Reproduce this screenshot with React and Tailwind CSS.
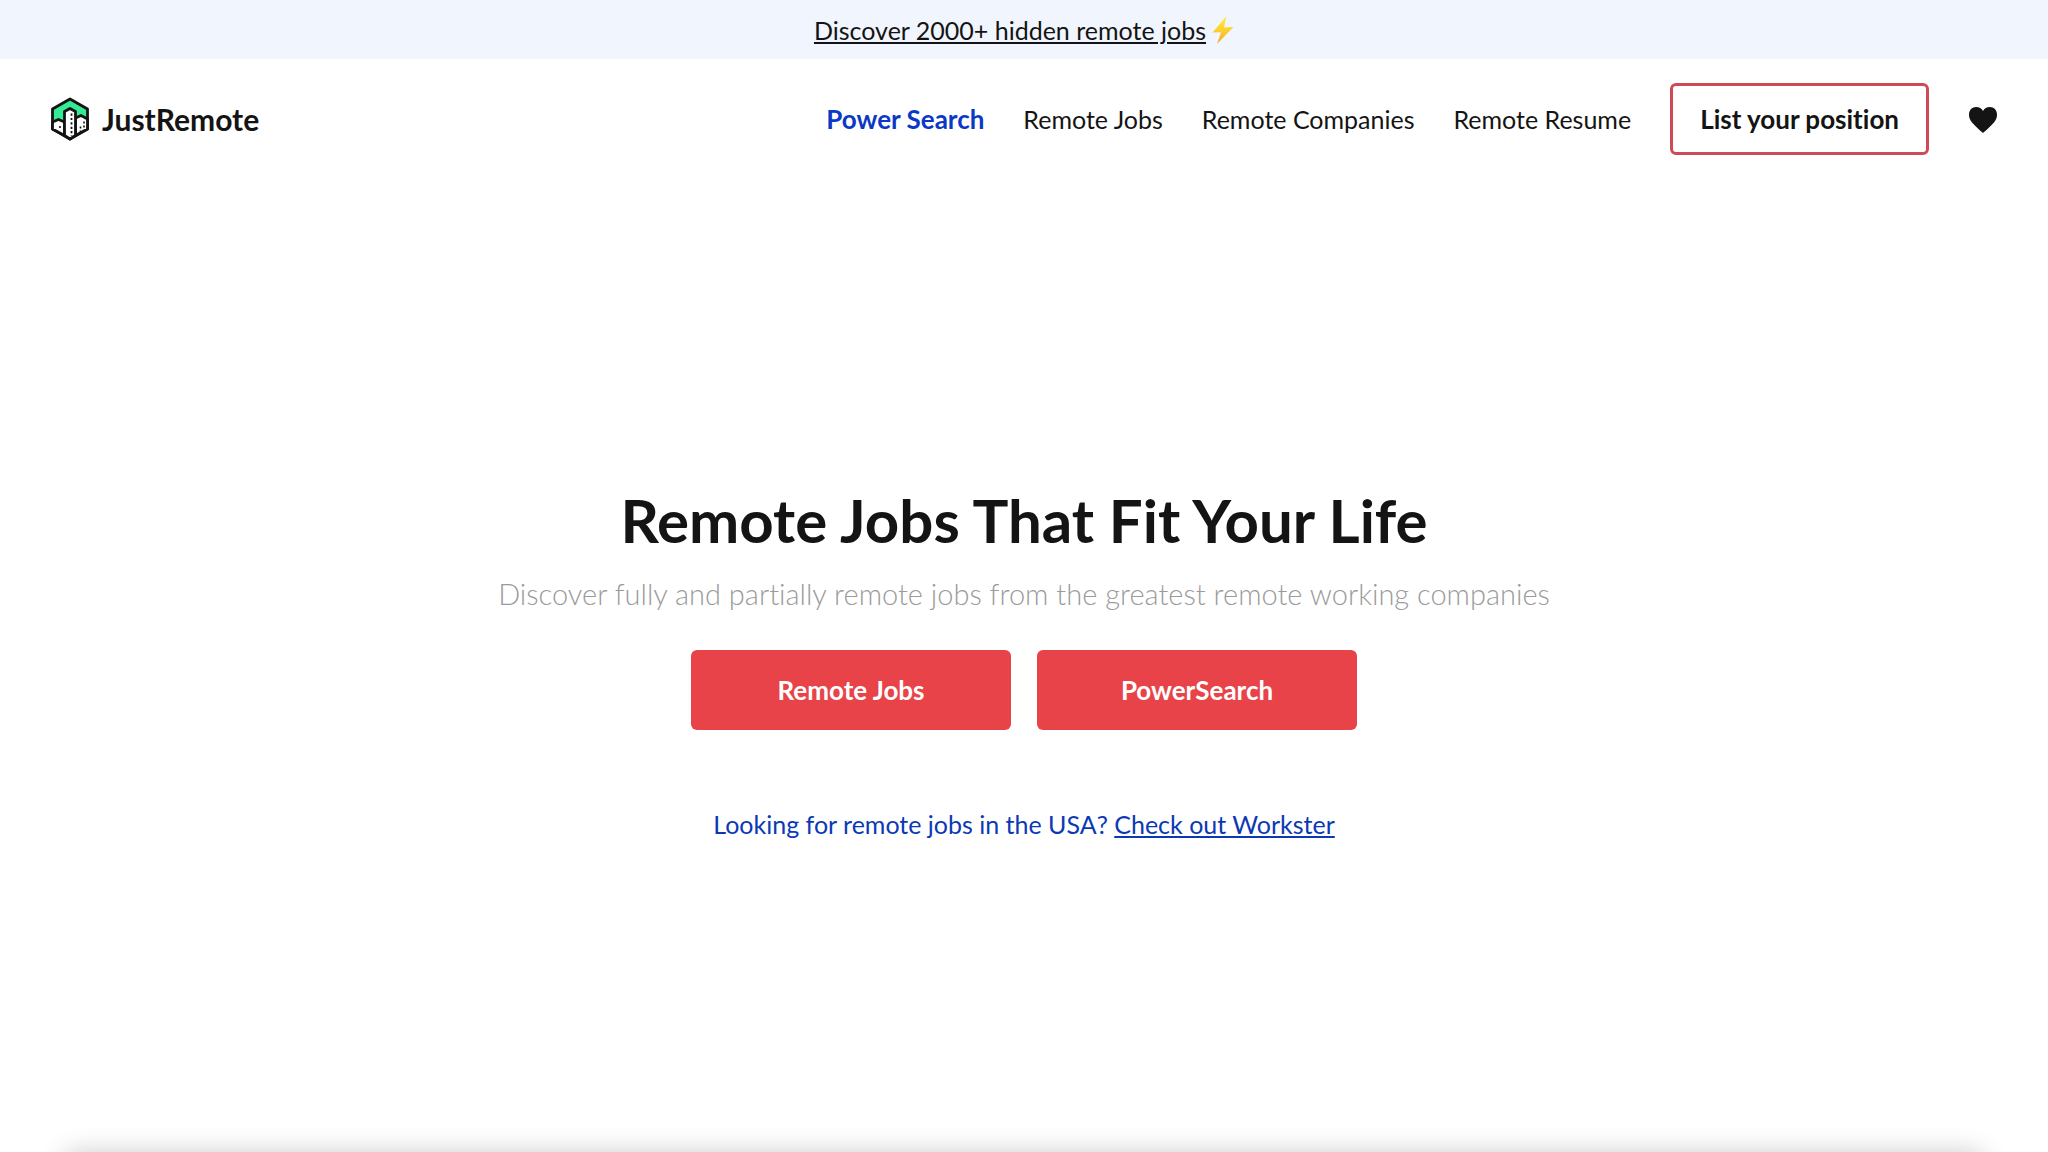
import React from 'react';

const navLinks = [
  { label: 'Remote Jobs', href: '/remote-jobs' },
  { label: 'Remote Companies', href: '/remote-companies' },
  { label: 'Remote Resume', href: '/remote-resume' },
];

const Logo = () => (
  <svg viewBox="0 0 40 44" className="w-10 h-11" fill="none" aria-hidden="true">
    <path
      d="M20 2 L37.5 12 V32 L20 42 L2.5 32 V12 Z"
      fill="#35ec96"
      stroke="#141414"
      strokeWidth="2.8"
      strokeLinejoin="round"
    />
    <path
      d="M2.5 25 L8.5 22.5 L14.5 25 V38.5 L2.5 32 Z M25.5 21 L31 18.5 L37.5 22 V32 L25.5 38.5 Z"
      fill="#fff"
      stroke="#141414"
      strokeWidth="2.8"
      strokeLinejoin="round"
    />
    <path
      d="M14.5 38.5 V14.5 L20 11.5 L25.5 14.5 V38.5 L20 42 Z"
      fill="#fff"
      stroke="#141414"
      strokeWidth="2.8"
      strokeLinejoin="round"
    />
    <path d="M21.5 16.5 V39" stroke="#141414" strokeWidth="1.8" strokeDasharray="2.2 2.2" />
    <path d="M34 24.5 V32" stroke="#141414" strokeWidth="1.6" strokeDasharray="2 2" />
    <path d="M30.5 29.5 V36 M10 29 V31.5" stroke="#141414" strokeWidth="1.6" strokeDasharray="2 2" />
  </svg>
);

const Bolt = () => (
  <svg viewBox="0 0 22 30" className="w-[22px] h-[30px]" aria-hidden="true">
    <defs>
      <linearGradient id="bolt" x1="0" y1="0" x2="0" y2="1">
        <stop offset="0" stopColor="#fdf03a" />
        <stop offset="0.6" stopColor="#fbc92d" />
        <stop offset="1" stopColor="#f5a32e" />
      </linearGradient>
    </defs>
    <path d="M14.5 1 L0.5 17.5 L9 17.3 L5 29 L21.5 12 L12 12.6 Z" fill="url(#bolt)" />
  </svg>
);

const Heart = () => (
  <svg viewBox="0 0 30 28" className="w-[30px] h-7" fill="#141414" aria-hidden="true">
    <path d="M15 28 C12.5 26 7 21 4 17.5 C1.5 14.5 1 12 1 9.5 C1 5 4 2 8.2 2 C11.2 2 13.7 3.5 15 6 C16.3 3.5 18.8 2 21.8 2 C26 2 29 5 29 9.5 C29 12 28.5 14.5 26 17.5 C23 21 17.5 26 15 28 Z" />
  </svg>
);

const App = () => {
  return (
    <div className="min-h-screen flex flex-col bg-white text-[#141414] font-[Lato,sans-serif] text-[25px] leading-8 [font-variant-ligatures:none]">
      <div className="bg-[#f1f6fe] h-[59px] flex items-center justify-center gap-1.5">
        <a href="/power-search" className="underline decoration-2 underline-offset-2">
          Discover 2000+ hidden remote jobs
        </a>
        <Bolt />
      </div>

      <header className="flex items-center justify-between px-[50px] py-6">
        <a href="/" className="flex items-center gap-3 text-[30px] font-bold">
          <Logo />
          JustRemote
        </a>
        <nav className="flex items-center gap-[39px]">
          <a href="/power-search" className="text-[26px] font-bold text-[#0b39c6]">Power Search</a>
          {navLinks.map((link) => (
            <a key={link.href} href={link.href}>{link.label}</a>
          ))}
          <a
            href="/post"
            className="border-3 border-[#d04a55] rounded-md px-[27px] py-[17px] text-[26px] font-bold"
          >
            List your position
          </a>
          <a href="/favourites" aria-label="Favourites">
            <Heart />
          </a>
        </nav>
      </header>

      <main className="flex-1 flex flex-col items-center justify-center text-center pt-5">
        <h1 className="text-[60px] leading-[80px] font-bold">Remote Jobs That Fit Your Life</h1>
        <p className="mt-3.5 text-[29px] leading-10 font-light text-[#9b9b9b]">
          Discover fully and partially remote jobs from the greatest remote working companies
        </p>
        <div className="mt-9 flex gap-[26px] text-[26px]">
          <a href="/remote-jobs" className="w-80 py-6 rounded-md bg-[#e84349] text-white font-bold">
            Remote Jobs
          </a>
          <a href="/power-search" className="w-80 py-6 rounded-md bg-[#e84349] text-white font-bold">
            PowerSearch
          </a>
        </div>
        <p className="mt-[78px] text-[#0b39b6]">
          Looking for remote jobs in the USA?{' '}
          <a href="/workster" className="underline decoration-2 underline-offset-2">Check out Workster</a>
        </p>
      </main>

      {/* top shadow of the listings panel */}
      <div className="h-8 pt-8 px-16 overflow-hidden">
        <div className="h-24 bg-white rounded-lg shadow-[0_0_26px_rgba(0,0,0,0.2)]"></div>
      </div>
    </div>
  );
};

export default App;
